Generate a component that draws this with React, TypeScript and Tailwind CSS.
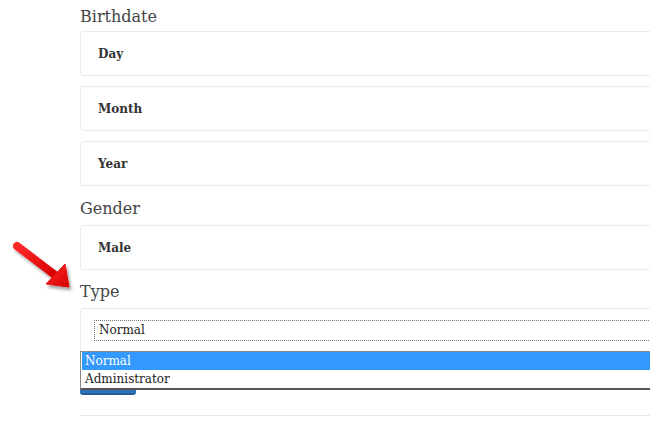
import React from 'react';

const serif = { fontFamily: '"DejaVu Serif", "Liberation Serif", serif' };

const Field = ({ children }: { children: React.ReactNode }) => (
  <div className="h-[45px] border border-[#ebebeb] rounded-[3px] bg-white flex items-center px-[17px] text-[12px] font-semibold text-[#333]">
    {children}
  </div>
);

const Label = ({ children }: { children: React.ReactNode }) => (
  <div className="text-[16px] leading-[22px] text-[#444]">{children}</div>
);

const Arrow = () => (
  <svg className="absolute left-0 top-[230px]" width="80" height="70" viewBox="0 230 80 70">
    <defs>
      <filter id="sh" x="-30%" y="-30%" width="160%" height="160%">
        <feDropShadow dx="2" dy="3" stdDeviation="1.5" floodColor="#000" floodOpacity="0.35" />
      </filter>
      <linearGradient id="rd" x1="0" y1="0" x2="1" y2="1">
        <stop offset="0" stopColor="#ff2a2a" />
        <stop offset="1" stopColor="#d60000" />
      </linearGradient>
    </defs>
    <g filter="url(#sh)" fill="url(#rd)" stroke="url(#rd)">
      <line x1="17" y1="246" x2="55" y2="275" strokeWidth="8" strokeLinecap="round" />
      <polygon points="69,287 46,284 65,264" strokeWidth="1" strokeLinejoin="round" />
    </g>
  </svg>
);

export default function App() {
  return (
    <div className="relative w-[650px] h-[421px] overflow-hidden bg-white" style={serif}>
      <Arrow />
      <div className="w-[620px] ml-[80px] pt-[6px] flex flex-col">
        <Label>Birthdate</Label>
        <div className="mt-[3px] flex flex-col gap-[10px]">
          <Field>Day</Field>
          <Field>Month</Field>
          <Field>Year</Field>
        </div>
        <div className="mt-[12px]">
          <Label>Gender</Label>
        </div>
        <div className="mt-[5px]">
          <Field>Male</Field>
        </div>
        <div className="mt-[11px]">
          <Label>Type</Label>
        </div>
        <div className="mt-[5px] h-[50px] border border-[#ebebeb] rounded-[3px] pl-[13px] pt-[11px]">
          <div className="h-[21px] border border-dotted border-[#777] pl-[4px] text-[12px] leading-[19px] text-[#222]">
            Normal
          </div>
        </div>
        <div className="mt-[10px] w-[56px] h-[27px] bg-[#2d72b8] rounded-[3px] border-b-2 border-[#245e99]" />
        <div className="mt-[20px] border-t border-[#e6e6e6]" />
      </div>
      <div className="absolute left-[80px] top-[351px] w-[600px] border border-[#8a8a8a] border-b-2 border-b-[#555] bg-white text-[12px] leading-[18px]">
        <div className="ml-[1px] bg-[#3399ff] text-white pl-[3px]">Normal</div>
        <div className="pl-[4px] text-[#222]">Administrator</div>
      </div>
    </div>
  );
}
